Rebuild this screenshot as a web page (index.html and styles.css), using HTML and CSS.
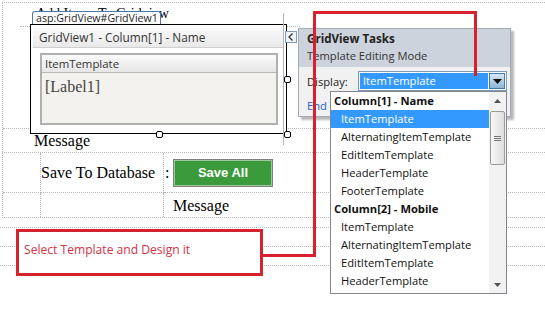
FILE: index.html
```html
<!DOCTYPE html>
<html lang="en">
<head>
    <meta charset="UTF-8">
    <title>GridView Template Editing</title>
    <link rel="stylesheet" href="styles.css">
</head>
<body>
    <div class="surface">
        <div class="sec1">
            <div class="title-row"><span class="title">Add Items To Gridview</span></div>
            <div class="grid-row">
                <div class="gridview">
                    <div class="gv-head">GridView1 - Column[1] - Name</div>
                    <div class="tpl">
                        <div class="tpl-head">ItemTemplate</div>
                        <div class="tpl-body">[Label1]</div>
                    </div>
                </div>
            </div>
            <div class="msg-row">Message</div>
        </div>

        <div class="sec2">
            <div class="cell c1"></div>
            <div class="cell c2 label">Save To Database</div>
            <div class="cell c3">:</div>
            <div class="cell c4"><button class="save-btn">Save All</button></div>
            <div class="cell c1 last"></div>
            <div class="cell c2 last"></div>
            <div class="cell c3 last"></div>
            <div class="cell c4 last msg">Message</div>
        </div>

        <div class="sec3">
            <div class="guide-row"></div>
            <div class="guide-row"></div>
        </div>

        <!-- designer overlays -->
        <div class="col-guide"></div>
        <div class="ctl-tag">asp:GridView#GridView1</div>
        <span class="handle h-right"></span>
        <span class="handle h-bottom"></span>
        <span class="handle h-corner"></span>

        <div class="smart-btn">
            <svg width="10" height="10" viewBox="0 0 10 10"><path d="M6.5 1.5 L3 5 L6.5 8.5" fill="none" stroke="#333" stroke-width="1.3"/></svg>
        </div>

        <div class="tasks">
            <div class="tasks-head">
                <div class="tasks-title">GridView Tasks</div>
                <div class="tasks-sub">Template Editing Mode</div>
            </div>
            <div class="tasks-body">
                <div class="display-row">
                    <span class="display-label">Display:</span>
                    <div class="combo">
                        <span class="combo-value">ItemTemplate</span>
                        <span class="combo-btn">
                            <svg width="9" height="5" viewBox="0 0 9 5"><path d="M0 0 H9 L4.5 5 Z" fill="#111"/></svg>
                        </span>
                    </div>
                </div>
                <a class="end-link">End Template Editing</a>
            </div>
        </div>

        <div class="ddlist">
            <ul class="ddlist-items">
                <li class="grp">Column[1] - Name</li>
                <li class="sel">ItemTemplate</li>
                <li>AlternatingItemTemplate</li>
                <li>EditItemTemplate</li>
                <li>HeaderTemplate</li>
                <li>FooterTemplate</li>
                <li class="grp">Column[2] - Mobile</li>
                <li>ItemTemplate</li>
                <li>AlternatingItemTemplate</li>
                <li>EditItemTemplate</li>
                <li>HeaderTemplate</li>
            </ul>
            <div class="vscroll">
                <span class="arrow">
                    <svg width="7" height="4" viewBox="0 0 7 4"><path d="M0 4 L3.5 0 L7 4 Z" fill="#555"/></svg>
                </span>
                <div class="thumb">
                    <svg width="7" height="5" viewBox="0 0 7 5"><path d="M0 0.5 H7 M0 2.5 H7 M0 4.5 H7" stroke="#777" stroke-width="1"/></svg>
                </div>
                <span class="arrow down">
                    <svg width="7" height="4" viewBox="0 0 7 4"><path d="M0 0 L3.5 4 L7 0 Z" fill="#555"/></svg>
                </span>
            </div>
        </div>

        <div class="callout">Select Template and Design it</div>

        <svg class="connector" width="545" height="320" viewBox="0 0 545 320">
            <polyline points="261,255.5 314.5,255.5 314.5,12.5 475.5,12.5 475.5,76" fill="none" stroke="#d8202e" stroke-width="3"/>
        </svg>
    </div>
</body>
</html>
```

FILE: styles.css
```css
* {
    margin: 0;
    padding: 0;
    box-sizing: border-box;
}

body {
    width: 545px;
    height: 320px;
    overflow: hidden;
    background: #fff;
    font-family: "Liberation Serif", serif;
    color: #000;
}

.surface {
    position: relative;
    width: 545px;
    height: 320px;
    padding: 2px 0 0 2px;
}

/* design surface tables */

.sec1 {
    border-top: 1px dotted #b8b8b8;
    border-left: 1px dotted #b8b8b8;
}

.title-row {
    height: 24px;
    width: 280px;
    margin-left: 17px;
    border-bottom: 1px dotted #b8b8b8;
    font-size: 14px;
    line-height: 22px;
    padding-left: 16px;
    white-space: nowrap;
}

.grid-row {
    height: 105px;
    border-bottom: 1px dotted #b8b8b8;
}

.gridview {
    width: 257px;
    height: 110px;
    margin: -3px 0 0 27px;
    border: 1px solid #000;
    background: #fff;
    padding: 2px;
    position: relative;
}

.gv-head {
    height: 21px;
    background: linear-gradient(#fbfbfb, #e9e9e9);
    border-bottom: 1px solid #cfcfcf;
    font-family: "Open Sans", sans-serif;
    font-size: 11.8px;
    line-height: 20px;
    color: #333;
    padding-left: 6px;
}

.tpl {
    height: 72px;
    margin: 5px 6px 0 7px;
    border: 2px solid #b0b0b0;
    background: #f4f2ee;
}

.tpl-head {
    height: 18px;
    background: linear-gradient(#fafafa, #e6e6e6);
    border-bottom: 1px solid #b8b8b8;
    font-family: "Open Sans", sans-serif;
    font-size: 11.4px;
    line-height: 17px;
    color: #333;
    padding-left: 3px;
}

.tpl-body {
    font-size: 16px;
    line-height: 22px;
    color: #444;
    padding: 3px 0 0 3px;
}

.msg-row {
    height: 23px;
    font-size: 16px;
    line-height: 23px;
    padding-left: 31px;
}

.sec2 {
    display: grid;
    grid-template-columns: 38px 123px 8px 1fr;
    grid-template-rows: 40px 24px;
    border-top: 1px dotted #b8b8b8;
    border-left: 1px dotted #b8b8b8;
    border-bottom: 1px dotted #b8b8b8;
}

.cell {
    display: flex;
    align-items: center;
    font-size: 16px;
    border-bottom: 1px dotted #b8b8b8;
}

.cell.last {
    border-bottom: none;
}

.c1, .c2 {
    border-right: 1px dotted #b8b8b8;
}

.c3 {
    padding-left: 1px;
}

.label {
    white-space: nowrap;
}

.c4 {
    padding-left: 1px;
}

.msg {
    padding-top: 2px;
}

.save-btn {
    width: 100px;
    height: 28px;
    background: #3a9a3c;
    border: 1px solid #808080;
    box-shadow: inset 0 0 0 1px #9fc69f;
    color: #fff;
    font-family: "Liberation Sans", sans-serif;
    font-weight: bold;
    font-size: 13px;
}

.sec3 {
    margin: 9px 0 0 -2px;
    border-bottom: 1px dotted #b8b8b8;
}

.guide-row {
    height: 19px;
    border-top: 1px dotted #b8b8b8;
}

/* overlays */

.col-guide {
    position: absolute;
    left: 283px;
    top: 13px;
    width: 1px;
    height: 132px;
    background: #b4b4b4;
}

.ctl-tag {
    position: absolute;
    left: 32px;
    top: 11px;
    height: 13px;
    padding: 0 2px 0 3px;
    background: #fff;
    border: 1px solid #4f75aa;
    border-bottom: none;
    border-radius: 3px 3px 0 0;
    font-family: "Open Sans", sans-serif;
    font-size: 10.6px;
    line-height: 12px;
    color: #1c1c1c;
}

.handle {
    position: absolute;
    width: 7px;
    height: 7px;
    border: 1px solid #000;
    border-radius: 2px;
    background: #fff;
}

.h-right { left: 284px; top: 76px; }
.h-bottom { left: 156px; top: 131px; }
.h-corner { left: 284px; top: 131px; }

.smart-btn {
    position: absolute;
    left: 285px;
    top: 31px;
    width: 12px;
    height: 12px;
    border: 1px solid #7f9db9;
    background: #eef3f9;
    display: flex;
    align-items: center;
    justify-content: center;
}

.tasks {
    position: absolute;
    left: 298px;
    top: 28px;
    width: 213px;
    height: 89px;
    border: 1px solid #a3abb6;
    background: #f1f1f1;
    box-shadow: 3px 3px 2px rgba(0, 0, 0, 0.28);
    font-family: "Open Sans", sans-serif;
    font-size: 11.2px;
    color: #222;
}

.tasks-head {
    height: 38px;
    background: #ccd3dc;
    padding: 1px 0 0 8px;
    line-height: 17px;
}

.tasks-title {
    font-weight: bold;
    font-size: 11.6px;
}

.tasks-sub {
    color: #333;
}

.tasks-body {
    padding: 4px 0 0 8px;
}

.display-row {
    display: flex;
    align-items: center;
    height: 20px;
}

.display-label {
    width: 51px;
}

.combo {
    display: flex;
    width: 149px;
    height: 20px;
    border: 1px solid #8199b4;
    background: #fff;
    padding: 1px;
}

.combo-value {
    flex: 1;
    background: #3399ff;
    color: #fff;
    padding-left: 3px;
    line-height: 16px;
}

.combo-btn {
    width: 16px;
    margin-left: 1px;
    background: linear-gradient(#d9e8f6, #8eb4d9);
    border: 1px solid #3d7cb0;
    display: flex;
    align-items: center;
    justify-content: center;
}

/* the open list hides all but the start of the link */
.end-link {
    display: block;
    width: 23px;
    overflow: hidden;
    white-space: nowrap;
    margin-top: 6px;
    color: #2263c4;
    line-height: 17px;
}

.ddlist {
    position: absolute;
    left: 330px;
    top: 91px;
    width: 177px;
    height: 203px;
    display: flex;
    border: 1px solid #82878f;
    background: #fff;
    font-family: "Open Sans", sans-serif;
    font-size: 11.2px;
    color: #111;
}

.ddlist-items {
    list-style: none;
    flex: 1;
    overflow: hidden;
}

.ddlist-items li {
    height: 18px;
    line-height: 18px;
    padding-left: 10px;
    white-space: nowrap;
}

.ddlist-items li.grp {
    font-weight: bold;
    padding-left: 3px;
}

.ddlist-items li.sel {
    background: #3399ff;
    color: #fff;
}

.vscroll {
    width: 17px;
    background: #f2f2f2;
    display: flex;
    flex-direction: column;
}

.arrow {
    height: 17px;
    display: flex;
    align-items: center;
    justify-content: center;
}

.arrow.down {
    margin-top: auto;
}

.thumb {
    height: 54px;
    width: 15px;
    margin: 2px 0 0 1px;
    border: 1px solid #9b9b9b;
    border-radius: 2px;
    background: linear-gradient(90deg, #f7f7f7, #dedede);
    display: flex;
    align-items: center;
    justify-content: center;
}

.callout {
    position: absolute;
    left: 16px;
    top: 229px;
    width: 247px;
    height: 47px;
    border: 3px solid #d4222f;
    background: #fff;
    padding: 10px 0 0 5px;
    font-family: "Open Sans", sans-serif;
    font-size: 12.1px;
    line-height: 16px;
    color: #cf3446;
}

.connector {
    position: absolute;
    left: 0;
    top: 0;
}
```
